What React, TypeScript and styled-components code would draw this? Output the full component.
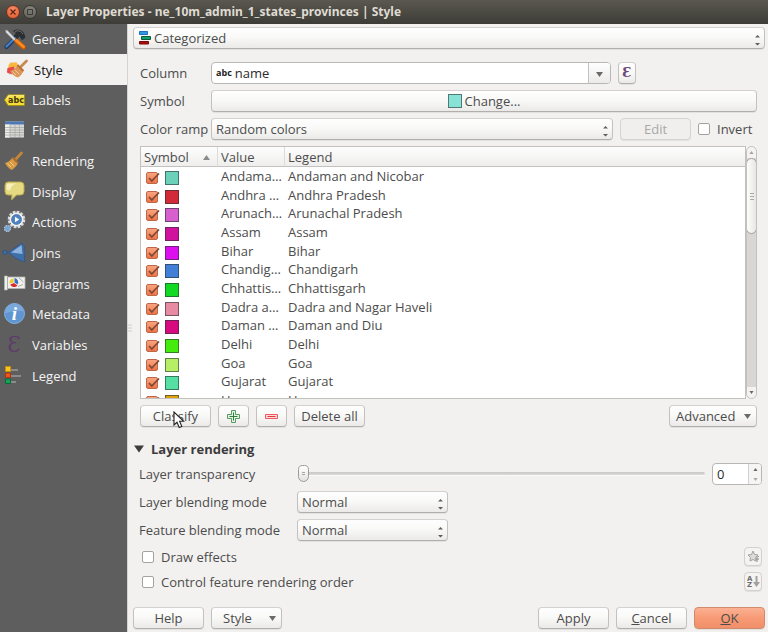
import React, { useRef, useState } from "react";
import styled, { createGlobalStyle, css } from "styled-components";

const ink = "#4c4c4c";
const face = "#f2f1f0";
const line = "#c3c1be";

const GlobalStyle = createGlobalStyle`
  *, *::before, *::after { box-sizing: border-box; }
  html, body { margin: 0; background: ${face}; }
  body, button, input, select {
    font-family: "Open Sans", "Noto Sans", sans-serif;
    font-size: 13px;
    line-height: 18px;
    color: ${ink};
  }
`;

const raised = css`
  border: 1px solid ${line};
  border-top-color: #d3d1cf;
  border-bottom-color: #b1afac;
  border-radius: 4px;
  background: linear-gradient(#fefefe, #f9f9f8 45%, #ebeae9);
  box-shadow: 0 1px 0 #e3e1df;
`;

const Dialog = styled.div`
  display: flex;
  flex-direction: column;
  height: 100vh;
  min-height: 560px;
`;

const TitleBar = styled.header`
  display: flex;
  align-items: center;
  gap: 3px;
  flex: none;
  height: 24px;
  padding: 0 6px;
  background: linear-gradient(#5a584f, #3d3c37);
`;

const WindowButton = styled.button<{ $close?: boolean }>`
  display: grid;
  place-items: center;
  width: 14px;
  height: 14px;
  padding: 0;
  border: 1px solid ${(p) => (p.$close ? "#6d3420" : "#35342f")};
  border-radius: 50%;
  background: ${(p) =>
    p.$close ? "radial-gradient(circle at 50% 30%, #f58c66, #e4572a)" : "linear-gradient(#84827a, #66655e)"};
`;

const Title = styled.h1`
  margin: 0 0 0 6px;
  font-family: "Noto Sans", "Open Sans", sans-serif;
  font-size: 12px;
  font-weight: 700;
  line-height: 18px;
  color: #dfdbd2;
  white-space: nowrap;
`;

const Body = styled.div`
  display: flex;
  flex: 1;
  min-height: 0;
`;

const Sidebar = styled.nav`
  flex: none;
  width: 128px;
  background: #5e5e5e;
  border-right: 1px solid #d5d3d1;
`;

const NavItem = styled.button<{ $active?: boolean }>`
  display: flex;
  align-items: center;
  gap: 6px;
  width: 100%;
  height: 31px;
  padding: 0 0 0 ${(p) => (p.$active ? 6 : 4)}px;
  border: 0;
  background: ${(p) => (p.$active ? face : "transparent")};
  color: ${(p) => (p.$active ? "#111" : "#f4f4f4")};
  text-align: left;
  &:nth-child(3n + 1), &:nth-child(3) { height: 30px; }
`;

const NavIcon = styled.svg`
  flex: none;
  width: 22px;
  height: 22px;
  overflow: visible;
`;

const Splitter = styled.div`
  display: flex;
  align-items: center;
  flex: none;
  width: 5px;
`;

const Main = styled.main`
  display: flex;
  flex-direction: column;
  flex: 1;
  min-width: 0;
  padding: 3px 3px 3px 0;
`;

const Content = styled.section`
  display: flex;
  flex-direction: column;
  flex: 1;
  min-height: 0;
  padding: 13px 8px 0 7px;
`;

const FormGrid = styled.div`
  display: grid;
  grid-template-columns: 64px 1fr;
  column-gap: 7px;
  row-gap: 6px;
`;

const Row = styled.div`
  display: flex;
  align-items: center;
  gap: 7px;
  min-width: 0;
`;

const FieldLabel = styled.label`
  align-self: center;
  white-space: nowrap;
`;

const SelectBox = styled.div`
  display: grid;
  align-items: center;
  flex: 1;
  min-width: 0;
  > * { grid-area: 1 / 1; }
  > svg { pointer-events: none; z-index: 1; }
`;

const Select = styled.select<{ $indent?: boolean }>`
  ${raised}
  appearance: none;
  width: 100%;
  height: 22px;
  padding: 0 20px 0 ${(p) => (p.$indent ? 20 : 4)}px;
`;

const UpDownIcon = styled.svg`
  justify-self: end;
  width: 7px;
  height: 12px;
  margin: 4px 4px 0 0;
`;

const LeadIcon = styled.svg`
  width: 12px;
  height: 14px;
  margin-left: 6px;
`;

const Button = styled.button<{ $width?: number; $primary?: boolean; $grow?: boolean }>`
  ${raised}
  display: inline-flex;
  align-items: center;
  justify-content: center;
  gap: 3px;
  position: relative;
  flex: ${(p) => (p.$grow ? "1" : "none")};
  width: ${(p) => (p.$width ? `${p.$width}px` : "auto")};
  height: 22px;
  padding: 0;
  white-space: nowrap;
  &:disabled { color: #aaa8a6; background: #f0efee; border-color: #d6d4d2; }
  ${(p) =>
    p.$primary &&
    css`
      background: linear-gradient(#fbb193, #f79a75 50%, #f08f69);
      border-color: #d08a6d;
    `}
`;

const MenuButton = styled(Button)`
  justify-content: space-between;
  padding: 0 5px 0 ${(p) => (p.$width && p.$width > 80 ? 6 : 11)}px;
`;

const ToolButton = styled.button<{ $flat?: boolean }>`
  ${raised}
  display: grid;
  place-items: center;
  flex: none;
  width: 18px;
  height: ${(p) => (p.$flat ? 19 : 22)}px;
  padding: 0;
  ${(p) => p.$flat && css`border-color: #d3d1cf; background: #f4f3f2;`}
`;

const Combo = styled.div`
  display: flex;
  align-items: center;
  flex: none;
  width: calc(100% - 146px);
  height: 22px;
  border: 1px solid #b9b7b4;
  border-radius: 4px;
  background: #fff;
  overflow: hidden;
`;

const ComboTag = styled.span`
  flex: none;
  padding: 0 3px 0 4px;
  font-size: 9px;
  font-weight: 700;
  color: #222;
`;

const TextInput = styled.input`
  flex: 1;
  min-width: 0;
  height: 20px;
  padding: 0;
  border: 0;
  outline: 0;
  background: transparent;
  color: #2b2b2b;
`;

const ComboDrop = styled.button`
  display: grid;
  place-items: center;
  width: 22px;
  height: 20px;
  padding: 2px 0 0;
  border: 0;
  border-left: 1px solid ${line};
  background: linear-gradient(#fefefe, #ecebea);
`;

const Swatch = styled.span<{ $color: string }>`
  display: inline-block;
  flex: none;
  width: 14px;
  height: 14px;
  border: 1px solid rgba(40, 50, 50, 0.6);
  background: ${(p) => p.$color};
`;

const CheckLabel = styled.label<{ $width?: number }>`
  display: flex;
  align-items: center;
  gap: 7px;
  width: ${(p) => (p.$width ? `${p.$width}px` : "auto")};
  white-space: nowrap;
`;

const CheckBox = styled.input`
  appearance: none;
  flex: none;
  width: 12px;
  height: 12px;
  margin: 0;
  border: 1px solid #a5a3a0;
  border-radius: 2px;
  background: #fff;
  &:checked { border-color: #c0664a; background: linear-gradient(#f9a47f, #ee7446); }
`;

const TickStack = styled.span`
  display: grid;
  width: 14px;
  height: 14px;
  align-items: center;
  > * { grid-area: 1 / 1; }
  > svg { width: 14px; height: 14px; pointer-events: none; z-index: 1; }
`;

const ListArea = styled.div`
  display: flex;
  flex: 1;
  min-height: 0;
  margin-top: 6px;
`;

const ListScroll = styled.div`
  flex: 1;
  min-width: 0;
  border: 1px solid ${line};
  background: #fff;
  overflow-y: auto;
  scrollbar-width: none;
`;

const Table = styled.table`
  width: 100%;
  table-layout: fixed;
  border-collapse: separate;
  border-spacing: 0;
`;

const HeadCell = styled.th<{ $width?: number }>`
  position: sticky;
  top: 0;
  z-index: 2;
  width: ${(p) => (p.$width ? `${p.$width}px` : "auto")};
  height: 20px;
  padding: 1px 3px 0;
  border-bottom: 1px solid ${line};
  border-right: 1px solid #dddbd9;
  background: linear-gradient(#fdfdfd, #efeeed);
  font-weight: 400;
  line-height: 18px;
  text-align: left;
  &:last-child { border-right: 0; }
`;

const HeadInner = styled.div`
  display: flex;
  align-items: center;
  justify-content: space-between;
  padding-right: 4px;
`;

const BodyRow = styled.tr`
  height: 19px;
  &:nth-child(3n) { height: 18px; }
`;

const Cell = styled.td`
  height: inherit;
  padding: 0 0 2px 3px;
  line-height: 16px;
  white-space: nowrap;
`;

const SymbolCell = styled(Cell)`
  padding: 0 0 0 5px;
  line-height: 14px;
`;

const SymbolPair = styled.div`
  display: flex;
  align-items: center;
  gap: 5px;
  height: 18px;
  padding-top: 2px;
`;

const ScrollTrack = styled.div`
  display: flex;
  flex-direction: column;
  flex: none;
  width: 11px;
  border: 1px solid ${line};
  border-radius: 6px;
  background: #d9d7d5;
  overflow: hidden;
`;

const ScrollButton = styled.button`
  display: grid;
  place-items: center;
  flex: none;
  height: 11px;
  padding: 0;
  border: 0;
  background: #f4f3f2;
`;

const ScrollThumb = styled.div`
  display: grid;
  place-items: center;
  flex: none;
  height: 76px;
  margin: 0 -1px;
  border: 1px solid #a3a19e;
  border-radius: 6px;
  background: linear-gradient(90deg, #fdfdfd, #e7e6e4);
`;

const ScrollRest = styled.div`
  flex: 1;
`;

const ButtonRow = styled(Row)`
  flex: none;
  margin-top: 6px;
`;

const Spacer = styled.span`
  flex: 1;
`;

const Cursor = styled.svg`
  position: absolute;
  left: 32px;
  top: 5px;
  width: 12px;
  height: 18px;
  pointer-events: none;
`;

const Group = styled.section`
  flex: none;
  padding: 12px 3px 0 1px;
`;

const GroupTitle = styled.h2`
  display: flex;
  align-items: center;
  gap: 7px;
  margin: 0 0 4px;
  font-size: 13px;
  font-weight: 700;
  line-height: 20px;
  color: #3c3c3c;
`;

const Settings = styled.div`
  display: grid;
  grid-template-columns: 151px 1fr;
  column-gap: 7px;
  row-gap: 6px;
  padding-left: 5px;
`;

const BlendBox = styled(SelectBox)`
  width: 151px;
`;

const Slider = styled.input`
  appearance: none;
  flex: 1;
  min-width: 0;
  height: 20px;
  margin: 0 0 0 1px;
  background: transparent;
  &::-webkit-slider-runnable-track {
    height: 4px;
    border-radius: 2px;
    background: linear-gradient(#c9c7c4, #dcdad8);
    border-bottom: 1px solid #fafafa;
  }
  &::-webkit-slider-thumb {
    appearance: none;
    width: 11px;
    height: 17px;
    margin-top: -7px;
    border: 1px solid #9d9b98;
    border-radius: 5px 5px 6px 6px;
    background: linear-gradient(#a9a7a4, #a9a7a4) 50% 6px / 3px 1px no-repeat,
      linear-gradient(#a9a7a4, #a9a7a4) 50% 8px / 3px 1px no-repeat, linear-gradient(#fff, #e3e2e0);
  }
`;

const Spin = styled.div`
  display: flex;
  flex: none;
  width: 50px;
  height: 22px;
  border: 1px solid #b9b7b4;
  border-radius: 4px;
  background: #fff;
  overflow: hidden;
  padding-left: 4px;
`;

const SpinButtons = styled.div`
  display: grid;
  grid-template-rows: 1fr 1fr;
  width: 13px;
  border-left: 1px solid #d3d1cf;
`;

const SpinButton = styled.button`
  display: grid;
  place-items: center;
  padding: 0;
  border: 0;
  background: #f6f5f4;
`;

const Options = styled.div`
  display: flex;
  flex-direction: column;
  gap: 6px;
  padding: 6px 0 0 5px;
`;

const OptionRow = styled.div`
  display: flex;
  align-items: center;
  justify-content: space-between;
  padding-left: 3px;
`;

const Footer = styled.footer`
  display: flex;
  flex: none;
  gap: 7px;
  padding: 16px 0 0;
`;

function Triangle({ up, size = 7, color = "#6a6a6a" }: { up?: boolean; size?: number; color?: string }) {
  return (
    <svg width={size} height={size - 2} viewBox="0 0 7 5" aria-hidden="true">
      <path d={up ? "M0 5L3.5 0L7 5Z" : "M0 0H7L3.5 5Z"} fill={color} />
    </svg>
  );
}

function UpDown() {
  return (
    <UpDownIcon viewBox="0 0 7 12" aria-hidden="true">
      <path d="M1 3.5L3.5 1L6 3.5Z M1 9L3.5 11.500L6 9Z" fill="#5e5e5e" />
    </UpDownIcon>
  );
}

const icons: Record<string, React.ReactNode> = {
  General: (
    <>
      <path d="M2.500 19L12.500 9" stroke="#1d3d6b" strokeWidth="4.400" strokeLinecap="round" />
      <path d="M2.500 18.500L11 10" stroke="#4a7fc1" strokeWidth="2.200" strokeLinecap="round" />
      <path d="M9 3C12.500.4 17.500 1.200 20 5L21.500 9.500L18 12.200L15.500 8.500L12.500 10.500L9.800 7.500L12 5Z" fill="#2b2f31" />
      <path d="M11 3.500C14 2 17 3 19 6" stroke="#72787a" strokeWidth="1" />
      <path d="M1.500 2L3.500 2.500L13 12.500L11.500 14L2 4.500Z" fill="#dfe2e4" stroke="#8c9092" strokeWidth=".5" />
      <path d="M12.500 13L19.500 19.300" stroke="#c85a00" strokeWidth="4.600" strokeLinecap="round" />
      <path d="M12.500 12.600L19.500 18.800" stroke="#fb8b1e" strokeWidth="2.800" strokeLinecap="round" />
    </>
  ),
  Style: (
    <>
      <path d="M1.500 9.500L5 4L10 3.500L12 8L8 16L3 15.500L.5 13Z" fill="#ddd3d3" />
      <path d="M2.500 6L4.500 3.500L11 3.500L12 7L7 9.500L2.500 9Z" fill="#f6b93c" />
      <path d="M1.500 9L8 7.500L9 13L5 15L1 13.500Z" fill="#e8494a" />
      <path d="M20.500 2L14.500 8" stroke="#c88c50" strokeWidth="2.800" strokeLinecap="round" />
      <path d="M4 12C7.500 11.500 9.500 9 11.500 6L17.500 12C16.500 14.500 14.500 17 12 18.500C9 18 6 15 4 12Z" fill="#dd965a" />
      <path d="M11.500 6L17.500 12" stroke="#b97335" strokeWidth="2" />
      <path d="M6.500 12.500L10 16M9 11L13 15" stroke="#f6c89c" strokeWidth="1" />
    </>
  ),
  Labels: (
    <>
      <path d="M.5 11L4 5.800H20.500V16.500H4Z" fill="#f3dc38" stroke="#a38f12" strokeWidth="1" />
      <path d="M2 10.500L4.800 6.800H20" stroke="#fff3a0" strokeWidth="1" />
      <text x="12" y="14" textAnchor="middle" fontSize="8" fontWeight="700" fontFamily="DejaVu Sans, sans-serif" fill="#3b3510">
        abc
      </text>
    </>
  ),
  Fields: (
    <>
      <path d="M1 2.500H20V18.500H1Z" fill="#d7d8d5" />
      <path d="M1 2.500H20V5.500H1Z" fill="#4d78b5" />
      <path d="M1 5.500H6V18.500H1Z" fill="#efefed" />
      <path d="M1 8.500H20M1 11H20M1 13.500H20M1 16H20M6 5.500V18.500M11 5.500V18.500M15.500 5.500V18.500" stroke="#a7a9a5" strokeWidth=".8" />
    </>
  ),
  Rendering: (
    <>
      <path d="M17.500 3L12 9" stroke="#c4863b" strokeWidth="2.600" strokeLinecap="round" />
      <path d="M1 13C4 12.500 7 10 8.500 7.500L14 13C12.500 16 10.500 18.500 7.500 20C5 18.500 2.500 16 1 13Z" fill="#d99a45" />
      <path d="M8.500 7.500L14 13" stroke="#a86d30" strokeWidth="2" />
      <path d="M3.500 13.500L7 17M6 12L10 16" stroke="#f3c98a" strokeWidth="1" />
    </>
  ),
  Display: (
    <>
      <path d="M4 1H16.500Q20 1 20 4.500V10.500Q20 14 16.500 14H12.500L7.500 19L8 14H4Q1 14 1 10.500V4.500Q1 1 4 1Z" fill="#e5d982" stroke="#b9a94b" strokeWidth="1" />
      <path d="M2.500 8.500V4.500Q2.500 2.500 5 2.500H12Q7 4.500 6 9.500Z" fill="#f7f0bd" />
    </>
  ),
  Actions: (
    <>
      <circle cx="12.500" cy="8.500" r="7.600" stroke="#d9d9d9" strokeWidth="2.400" strokeDasharray="2.770 1.200" />
      <circle cx="12.500" cy="8.500" r="7" fill="#f1f1f1" />
      <circle cx="12.500" cy="8.500" r="5" fill="#4f84c0" stroke="#2f5f98" strokeWidth=".6" />
      <path d="M11 5.800L15.200 8.500L11 11.200Z" fill="#fff" />
      <circle cx="3.500" cy="17.500" r="3" fill="#75a5d5" stroke="#b4c6d8" strokeWidth="1.200" strokeDasharray="1.570 .78" />
    </>
  ),
  Joins: (
    <>
      <path d="M4.500 10.500L18 1Q19.500 4 20.500 5.500Q19.500 8 20.500 9.500L21.500 11Q19.500 13 20.500 15.500V20Q11 17 4.500 10.500Z" fill="#3f6fa9" stroke="#2a5288" strokeWidth=".7" />
      <path d="M7 10.500L17.500 3L18.500 12Z" fill="#8cb2dd" />
      <path d="M0 10.500H5" stroke="#315f99" strokeWidth="1.500" />
      <circle cx="1" cy="10.500" r="2" fill="#3e70ad" stroke="#234a7b" strokeWidth=".6" />
    </>
  ),
  Diagrams: (
    <>
      <path d="M.5 3H3L4 4H21V15.500H4L3 17H.5Z" fill="#f0f0ee" stroke="#b4b4b0" strokeWidth=".8" />
      <path d="M3.500 4V16M15 5L19.500 9M14 13.500L19 11.500" stroke="#9b9b98" strokeWidth=".8" />
      <path d="M9.500 9.500V5.500A4 4 0 0 0 5.700 10.500Z" fill="#f2c81e" />
      <path d="M10.500 9.500V5A4.200 4.200 0 0 1 13.500 11.500Z" fill="#3a6fc0" />
      <path d="M10 10L6.300 11.500A4.200 4.200 0 0 0 13.500 12.500Z" fill="#d92b2b" />
    </>
  ),
  Metadata: (
    <>
      <circle cx="10.500" cy="10.500" r="10" fill="#5f95d0" stroke="#86b1e0" strokeWidth="1" />
      <path d="M1.500 10.500A9 9 0 0 1 19.500 8.500Q10 6.500 1.500 10.500Z" fill="#79a8dc" />
      <text x="10.500" y="16.500" textAnchor="middle" fontFamily="Liberation Serif, serif" fontStyle="italic" fontWeight="700" fontSize="19" fill="#fff">
        i
      </text>
    </>
  ),
  Variables: (
    <text x="10" y="18" textAnchor="middle" fontFamily="DejaVu Serif, serif" fontSize="22" fill="#5f3b6b">
      Ɛ
    </text>
  ),
  Legend: (
    <>
      <path d="M7 5H14M7 11H17M7 17H12" stroke="#9a9a9a" strokeWidth="1.400" />
      <path d="M1.500 1.500H6.500V6.500H1.500Z" fill="#fcc419" stroke="#c98f00" strokeWidth=".8" />
      <path d="M1.500 8H6.500V12.500H1.500Z" fill="#f0521c" stroke="#ad2f00" strokeWidth=".8" />
      <path d="M1.500 14H6.500V18.500H1.500Z" fill="#17a35b" stroke="#00652f" strokeWidth=".8" />
    </>
  ),
};

const pages = [
  "General", "Style", "Labels", "Fields", "Rendering", "Display",
  "Actions", "Joins", "Diagrams", "Metadata", "Variables", "Legend",
];

const categories: [string, string, string][] = [
  ["#6bd1b9", "Andama…", "Andaman and Nicobar"],
  ["#d22a38", "Andhra …", "Andhra Pradesh"],
  ["#d85fce", "Arunach…", "Arunachal Pradesh"],
  ["#d0129c", "Assam", "Assam"],
  ["#dd0fee", "Bihar", "Bihar"],
  ["#4280d8", "Chandig…", "Chandigarh"],
  ["#12da22", "Chhattis…", "Chhattisgarh"],
  ["#e98aa4", "Dadra a…", "Dadra and Nagar Haveli"],
  ["#d80a80", "Daman …", "Daman and Diu"],
  ["#45eb0c", "Delhi", "Delhi"],
  ["#b6ef66", "Goa", "Goa"],
  ["#56dfa2", "Gujarat", "Gujarat"],
  ["#dfa011", "Haryana", "Haryana"],
];

export default function App() {
  const [page, setPage] = useState("Style");
  const [transparency, setTransparency] = useState(0);
  const list = useRef<HTMLDivElement>(null);
  const scrollList = (dy: number) => list.current?.scrollBy(0, dy);
  const change = (v: number) => setTransparency(Math.max(0, Math.min(100, v || 0)));

  return (
    <Dialog>
      <GlobalStyle />
      <TitleBar>
        <WindowButton $close aria-label="Close">
          <svg width="6" height="6" viewBox="0 0 6 6"><path d="M.5.5L5.500 5.500M5.500.5L.5 5.500" stroke="#5b2412" strokeWidth="1.300" /></svg>
        </WindowButton>
        <WindowButton aria-label="Maximize">
          <svg width="6" height="6" viewBox="0 0 6 6"><path d="M.5.5H5.500V5.500H.5Z" stroke="#3c3b37" fill="none" /></svg>
        </WindowButton>
        <Title>Layer Properties - ne_10m_admin_1_states_provinces | Style</Title>
      </TitleBar>
      <Body>
        <Sidebar aria-label="Property pages">
          {pages.map((name) => (
            <NavItem key={name} $active={name === page} onClick={() => setPage(name)}>
              <NavIcon viewBox="0 0 22 22" fill="none" aria-hidden="true">{icons[name]}</NavIcon>
              {name}
            </NavItem>
          ))}
        </Sidebar>
        <Splitter>
          <svg width="4" height="8" viewBox="0 0 4 8" aria-hidden="true">
            <path d="M0 1H4M0 4H4M0 7H4" stroke="#d0cecb" />
          </svg>
        </Splitter>
        <Main>
          <Row>
            <SelectBox>
              <Select $indent aria-label="Renderer"><option>Categorized</option></Select>
              <LeadIcon viewBox="0 0 12 14" aria-hidden="true">
                <path d="M.5.500H8.500V3.500H.5Z" fill="#2f9ddb" stroke="#1f6fc4" />
                <path d="M2.500 5.500H11.500V8.500H2.500Z" fill="#14a06a" stroke="#0b5c3a" />
                <path d="M.5 10.500H9.500V13H.5Z" fill="#a81010" stroke="#7c0606" />
              </LeadIcon>
              <UpDown />
            </SelectBox>
          </Row>
          <Content>
            <FormGrid>
              <FieldLabel htmlFor="column">Column</FieldLabel>
              <Row>
                <Combo>
                  <ComboTag>abc</ComboTag>
                  <TextInput id="column" defaultValue="name" />
                  <ComboDrop aria-label="Show columns"><Triangle /></ComboDrop>
                </Combo>
                <ToolButton aria-label="Expression">
                  <svg width="14" height="18" viewBox="0 0 14 18" aria-hidden="true">
                    <text x="7" y="13" textAnchor="middle" fontFamily="DejaVu Serif, serif" fontSize="13" fontWeight="700" fill="#6b4878">Ɛ</text>
                  </svg>
                </ToolButton>
              </Row>
              <FieldLabel htmlFor="symbol">Symbol</FieldLabel>
              <Row>
                <Button id="symbol" $grow><Swatch $color="#87e3d6" />Change...</Button>
              </Row>
              <FieldLabel htmlFor="ramp">Color ramp</FieldLabel>
              <Row>
                <SelectBox>
                  <Select id="ramp"><option>Random colors</option></Select>
                  <UpDown />
                </SelectBox>
                <Button $width={71} disabled>Edit</Button>
                <CheckLabel $width={59}><CheckBox type="checkbox" />Invert</CheckLabel>
              </Row>
            </FormGrid>
            <ListArea>
              <ListScroll ref={list}>
                <Table>
                  <thead>
                    <tr>
                      <HeadCell $width={77}>
                        <HeadInner>Symbol<Triangle up color="#8b8b8b" /></HeadInner>
                      </HeadCell>
                      <HeadCell $width={67}>Value</HeadCell>
                      <HeadCell>Legend</HeadCell>
                    </tr>
                  </thead>
                  <tbody>
                    {categories.map(([color, value, legend]) => (
                      <BodyRow key={legend}>
                        <SymbolCell>
                          <SymbolPair>
                            <TickStack>
                              <CheckBox type="checkbox" defaultChecked aria-label={legend} />
                              <svg viewBox="0 0 14 14" aria-hidden="true">
                                <path d="M3 7L5.800 10L13 2.500" stroke="#7d4735" strokeWidth="1.700" fill="none" />
                              </svg>
                            </TickStack>
                            <Swatch $color={color} />
                          </SymbolPair>
                        </SymbolCell>
                        <Cell>{value}</Cell>
                        <Cell>{legend}</Cell>
                      </BodyRow>
                    ))}
                  </tbody>
                </Table>
              </ListScroll>
              <ScrollTrack>
                <ScrollButton aria-label="Scroll up" onClick={() => scrollList(-19)}><Triangle up size={5} color="#a5a3a0" /></ScrollButton>
                <ScrollThumb>
                  <svg width="4" height="7" viewBox="0 0 4 7" aria-hidden="true"><path d="M0 .5H4M0 3.500H4M0 6.500H4" stroke="#aaa8a5" /></svg>
                </ScrollThumb>
                <ScrollRest />
                <ScrollButton aria-label="Scroll down" onClick={() => scrollList(19)}><Triangle size={5} /></ScrollButton>
              </ScrollTrack>
            </ListArea>
            <ButtonRow>
              <Button $width={71}>
                Classify
                <Cursor viewBox="0 0 12 18" aria-hidden="true">
                  <path d="M1 1V14L4 11.300L6.200 16.500L8.800 15.400L6.600 10.300H10.800Z" fill="#fff" stroke="#222" strokeWidth="1.100" />
                </Cursor>
              </Button>
              <Button $width={31} aria-label="Add category">
                <svg width="13" height="13" viewBox="0 0 13 13" aria-hidden="true">
                  <path d="M4.500.5H8.500V4.500H12.500V8.500H8.500V12.500H4.500V8.500H.5V4.500H4.500Z" fill="#e3f3e3" stroke="#5c9a63" />
                  <path d="M6.500 2.500V10.500M2.500 6.500H10.500" stroke="#2f7d3a" />
                </svg>
              </Button>
              <Button $width={31} aria-label="Remove category">
                <svg width="13" height="5" viewBox="0 0 13 5" aria-hidden="true">
                  <path d="M.5.500H12.500V4.500H.5Z" fill="#fbdada" stroke="#ee5a5e" />
                  <path d="M2.500 2.500H10.500" stroke="#e2383e" />
                </svg>
              </Button>
              <Button $width={71}>Delete all</Button>
              <Spacer />
              <MenuButton $width={88}>Advanced<Triangle /></MenuButton>
            </ButtonRow>
          </Content>
          <Group>
            <GroupTitle><Triangle size={10} color="#3c3c3c" />Layer rendering</GroupTitle>
            <Settings>
              <FieldLabel htmlFor="transparency">Layer transparency</FieldLabel>
              <Row>
                <Slider id="transparency" type="range" min={0} max={100} value={transparency} onChange={(e) => change(+e.target.value)} />
                <Spin>
                  <TextInput aria-label="Transparency value" value={transparency} onChange={(e) => change(+e.target.value)} />
                  <SpinButtons>
                    <SpinButton aria-label="Increase" onClick={() => change(transparency + 1)}><Triangle up size={5} /></SpinButton>
                    <SpinButton aria-label="Decrease" onClick={() => change(transparency - 1)}><Triangle size={5} color="#aaa8a5" /></SpinButton>
                  </SpinButtons>
                </Spin>
              </Row>
              <FieldLabel htmlFor="layer-blend">Layer blending mode</FieldLabel>
              <BlendBox>
                <Select id="layer-blend"><option>Normal</option></Select>
                <UpDown />
              </BlendBox>
              <FieldLabel htmlFor="feature-blend">Feature blending mode</FieldLabel>
              <BlendBox>
                <Select id="feature-blend"><option>Normal</option></Select>
                <UpDown />
              </BlendBox>
            </Settings>
            <Options>
              <OptionRow>
                <CheckLabel><CheckBox type="checkbox" />Draw effects</CheckLabel>
                <ToolButton $flat aria-label="Customize effects">
                  <svg width="13" height="13" viewBox="0 0 13 13" aria-hidden="true">
                    <path d="M6 1L7.500 4.500L11 5L8.500 7.500L9 11L6 9.500L3 11L3.500 7.500L1 5L4.500 4.500Z" fill="#dcdbd9" stroke="#a3a19f" />
                    <path d="M10 12V7.500Q10 6.500 12 6.500M9 9H12" stroke="#8d8b89" fill="none" />
                  </svg>
                </ToolButton>
              </OptionRow>
              <OptionRow>
                <CheckLabel><CheckBox type="checkbox" />Control feature rendering order</CheckLabel>
                <ToolButton $flat aria-label="Define rendering order">
                  <svg width="13" height="13" viewBox="0 0 13 13" aria-hidden="true">
                    <text x="0" y="6" fontSize="7" fontWeight="700" fontFamily="DejaVu Sans, sans-serif" fill="#6f6d6b">A</text>
                    <text x="0" y="12" fontSize="7" fontWeight="700" fontFamily="DejaVu Sans, sans-serif" fill="#6f6d6b">Z</text>
                    <path d="M8.500 1H10.500V7H13L9.500 12L6 7H8.500Z" fill="#a3a19f" />
                  </svg>
                </ToolButton>
              </OptionRow>
            </Options>
          </Group>
          <Footer>
            <Button $width={71}>Help</Button>
            <MenuButton $width={71}>Style<Triangle /></MenuButton>
            <Spacer />
            <Button $width={71}>Apply</Button>
            <Button $width={71}><span><u>C</u>ancel</span></Button>
            <Button $width={71} $primary><span><u>O</u>K</span></Button>
          </Footer>
        </Main>
      </Body>
    </Dialog>
  );
}
